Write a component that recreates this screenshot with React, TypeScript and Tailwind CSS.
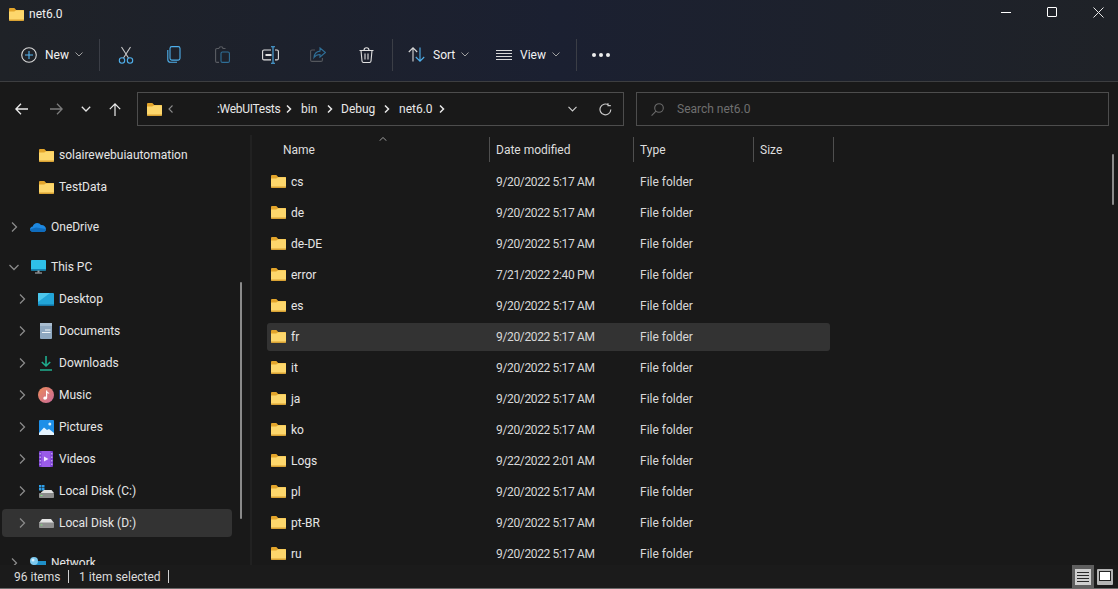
import React from "react";

const Folder = ({ className = "w-[15px] h-[13px]" }: { className?: string }) => (
  <svg viewBox="0 0 15 13" className={className}>
    <path d="M0 1.2C0 .5.5 0 1.2 0h3.6c.4 0 .7.1 1 .4L7.2 2H15v2H0z" fill="#e3a52b" />
    <path d="M0 3.4h5.2L7.2 2.2H13.8c.7 0 1.2.5 1.2 1.2v8.4c0 .7-.5 1.2-1.2 1.2H1.2C.5 13 0 12.500 0 11.800z" fill="#fdd76c" />
    <path d="M0 11.600h15v.2c0 .7-.5 1.200-1.200 1.200H1.200C.5 13 0 12.500 0 11.800z" fill="#d9a233" />
  </svg>
);

const Chevron = ({ open }: { open?: boolean }) => (
  <svg viewBox="0 0 12 12" className="w-3 h-3" fill="none" stroke="#8a8a8a" strokeWidth="1.300">
    {open ? <path d="M1.500 4l4.500 4.500L10.500 4" /> : <path d="M4 1.500L8.500 6 4 10.500" />}
  </svg>
);

const SmallDown = () => (
  <svg viewBox="0 0 8 5" className="w-2 h-[5px]" fill="none" stroke="#a0a0a0" strokeWidth="1">
    <path d="M.5.5L4 4 7.500.5" />
  </svg>
);

const Crumb = () => (
  <svg viewBox="0 0 6 8" className="w-[6px] h-2" fill="none" stroke="#e8e8e8" strokeWidth="1.500">
    <path d="M1 .5L4.500 4 1 7.500" />
  </svg>
);

const Divider = () => <div className="w-px h-8 bg-[#3b3e46] shrink-0" />;

const iconBox = "w-12 h-8 flex items-center justify-center shrink-0";

const Toolbar = () => (
  <div className="flex items-center h-[53px] text-[#f2f2f2]">
    <div className="flex items-center w-[99px] pl-[21px] shrink-0">
      <svg viewBox="0 0 16 16" className="w-4 h-4" fill="none" strokeWidth="1.100">
        <circle cx="8" cy="8" r="7.300" stroke="#d8d8d8" />
        <path d="M8 4v8M4 8h8" stroke="#56b4f0" />
      </svg>
      <span className="ml-[8px] w-[26px]">New</span>
      <span className="ml-[4px] flex"><SmallDown /></span>
    </div>
    <Divider />
    <div className="flex items-center ml-[2px]">
      <div className={iconBox}>
        <svg viewBox="0 0 16 18" className="w-4 h-[18px]" fill="none" strokeWidth="1.100">
          <path d="M3.500 1L10.500 12M12.500 1L5.500 12" stroke="#c8c8c8" />
          <circle cx="4" cy="14.500" r="2.700" stroke="#4fb0ec" />
          <circle cx="12" cy="14.500" r="2.700" stroke="#4fb0ec" />
        </svg>
      </div>
      <div className={iconBox}>
        <svg viewBox="0 0 14 17" className="w-[14px] h-[17px]" fill="none" strokeWidth="1.100" stroke="#4fb0ec">
          <rect x="3" y=".6" width="10" height="13.500" rx="1.800" />
          <path d="M.8 4v9.500C.8 15 2 16.300 3.500 16.300H10" />
        </svg>
      </div>
      <div className={iconBox}>
        <svg viewBox="0 0 15 17" className="w-[15px] h-[17px]" fill="none" strokeWidth="1.100">
          <path d="M4 2.500H2C1.200 2.500.6 3.100.6 4v11c0 .8.600 1.400 1.400 1.400h2M4 2.500C4 1.500 5 .8 6 .8s2 .7 2 1.700h2.500" stroke="#5a5d63" />
          <rect x="6" y="6" width="8.400" height="10.400" rx="1.400" stroke="#2f6f97" />
        </svg>
      </div>
      <div className={iconBox}>
        <svg viewBox="0 0 17 18" className="w-[17px] h-[18px]" fill="none" strokeWidth="1.100">
          <path d="M9 4H2C1.200 4 .6 4.600.6 5.500v7c0 .8.600 1.400 1.400 1.400h7M13 4h2c.8 0 1.400.6 1.400 1.500v7c0 .8-.600 1.400-1.400 1.400h-2" stroke="#e2e2e2" />
          <path d="M3.500 9h6" stroke="#e2e2e2" strokeWidth="2" />
          <path d="M11 1v16M9 .8h4M9 17.200h4" stroke="#4fb0ec" />
        </svg>
      </div>
      <div className={iconBox}>
        <svg viewBox="0 0 16 15" className="w-4 h-[15px]" fill="none" strokeWidth="1.100">
          <path d="M5 3H2C1.200 3 .6 3.600.6 4.500v8.500c0 .8.600 1.400 1.400 1.400h9c.8 0 1.400-.6 1.400-1.400v-2" stroke="#54575d" />
          <path d="M10 1l5.400 4.500L10 10V7.500c-2.500 0-4.500.8-6 3 .3-3.500 2.500-6 6-6.400z" stroke="#2f6f97" />
        </svg>
      </div>
      <div className={iconBox}>
        <svg viewBox="0 0 15 16" className="w-[15px] h-4" fill="none" stroke="#e0e0e0" strokeWidth="1.100">
          <path d="M.5 3.500h14M5 3.500C5 1.800 6 .8 7.500.8S10 1.800 10 3.500M2 3.500l1 10.500c.1 1 .8 1.500 1.600 1.500h5.800c.8 0 1.500-.5 1.600-1.500l1-10.500M6 6.500v6M9 6.500v6" />
        </svg>
      </div>
    </div>
    <div className="ml-[2px]"><Divider /></div>
    <div className="flex items-center w-[103px] pl-[15px] shrink-0">
      <svg viewBox="0 0 17 15" className="w-[17px] h-[15px]" fill="none" strokeWidth="1.100">
        <path d="M5 14.500V1M.8 5L5 .8 9.200 5" stroke="#d8d8d8" />
        <path d="M12 .5V14M7.800 10L12 14.200 16.200 10" stroke="#4fb0ec" />
      </svg>
      <span className="ml-[8px] w-[22px]">Sort</span>
      <span className="ml-[6px] flex"><SmallDown /></span>
    </div>
    <div className="flex items-center w-[80px] shrink-0">
      <svg viewBox="0 0 16 10" className="w-4 h-[10px]" fill="none" stroke="#d8d8d8" strokeWidth="1">
        <path d="M0 .5h16M0 3.500h16M0 6.500h16M0 9.500h16" />
      </svg>
      <span className="ml-[8px] w-[27px]">View</span>
      <span className="ml-[5px] flex"><SmallDown /></span>
    </div>
    <Divider />
    <div className="ml-[15px] flex gap-[3px]">
      <span className="w-[4px] h-[4px] rounded-full bg-[#eeeeee]" />
      <span className="w-[4px] h-[4px] rounded-full bg-[#eeeeee]" />
      <span className="w-[4px] h-[4px] rounded-full bg-[#eeeeee]" />
    </div>
  </div>
);

const TitleBar = () => (
  <div className="flex items-center h-[28px] text-[#f0f0f0]">
    <div className="ml-[9px] flex"><Folder /></div>
    <span className="ml-[5px]">net6.0</span>
    <div className="ml-auto -mr-[3px] flex items-center self-start">
      <div className="w-[46px] h-[24px] flex items-center justify-center">
        <div className="w-[10px] h-px bg-white" />
      </div>
      <div className="w-[46px] h-[24px] flex items-center justify-center">
        <div className="w-[10px] h-[10px] border border-white rounded-[1px]" />
      </div>
      <div className="w-[46px] h-[24px] flex items-center justify-center">
        <svg viewBox="0 0 11 11" className="w-[11px] h-[11px]" stroke="#e8e8e8" strokeWidth="1">
          <path d="M.5.5l10 10M10.500.5l-10 10" />
        </svg>
      </div>
    </div>
  </div>
);

const NavBar = () => (
  <div className="flex items-center h-[53px] pt-px text-[#e8e8e8]">
    <div className="flex items-center w-[137px] shrink-0">
      <svg viewBox="0 0 13 12" className="ml-[15px] w-[13px] h-3" fill="none" stroke="#ececec" strokeWidth="1.300">
        <path d="M13 6H1M6 .8L.9 6 6 11.200" />
      </svg>
      <svg viewBox="0 0 13 12" className="ml-[22px] w-[13px] h-3" fill="none" stroke="#7c7c7c" strokeWidth="1.300">
        <path d="M0 6h12M7 .8L12.100 6 7 11.200" />
      </svg>
      <svg viewBox="0 0 10 6" className="ml-[18px] w-[10px] h-[6px]" fill="none" stroke="#e4e4e4" strokeWidth="1.300">
        <path d="M.8.8L5 5l4.200-4.200" />
      </svg>
      <svg viewBox="0 0 12 13" className="ml-[18px] w-3 h-[13px]" fill="none" stroke="#ececec" strokeWidth="1.200">
        <path d="M6 13V1M.8 6.200L6 .9l5.200 5.300" />
      </svg>
    </div>
    <div className="flex items-center w-[487px] h-[34px] border border-[#4d4d4d] shrink-0">
      <div className="ml-[9px] flex"><Folder /></div>
      <svg viewBox="0 0 5 8" className="ml-[6px] w-[5px] h-2" fill="none" stroke="#8c8c8c" strokeWidth="1.100">
        <path d="M4.500.5L1 4l3.500 3.500" />
      </svg>
      <span className="ml-[44px] w-[62px] tracking-[-0.3px]">:WebUITests</span>
      <span className="ml-[7px] flex"><Crumb /></span>
      <span className="ml-[9px] w-[17px]">bin</span>
      <span className="ml-[9px] flex"><Crumb /></span>
      <span className="ml-[8px] w-[35px]">Debug</span>
      <span className="ml-[8px] flex"><Crumb /></span>
      <span className="ml-[9px] w-[32px]">net6.0</span>
      <span className="ml-[8px] flex"><Crumb /></span>
      <svg viewBox="0 0 9 6" className="ml-[123px] w-[9px] h-[6px]" fill="none" stroke="#d0d0d0" strokeWidth="1.100">
        <path d="M.5.8L4.500 5 8.500.8" />
      </svg>
      <svg viewBox="0 0 13 13" className="ml-[22px] w-[13px] h-[13px]" fill="none" stroke="#c8c8c8" strokeWidth="1.200">
        <path d="M11.800 6.500A5.400 5.400 0 1 1 9.500 2M9 .2V2.700h2.800" />
      </svg>
    </div>
    <div className="flex items-center ml-[12px] w-[473px] h-[34px] border border-[#4d4d4d] shrink-0 text-[#6f6f6f]">
      <svg viewBox="0 0 13 13" className="ml-[14px] w-[13px] h-[13px]" fill="none" stroke="#6a6a6a" strokeWidth="1.100">
        <circle cx="8" cy="5" r="4.300" />
        <path d="M5 8.200L.6 12.600" />
      </svg>
      <span className="ml-[13px]">Search net6.0</span>
    </div>
  </div>
);

const icons: Record<string, React.ReactNode> = {
  folder: <Folder />,
  onedrive: (
    <svg viewBox="0 0 16 10" className="w-4 h-[10px]">
      <path d="M3.500 10C1.500 10 0 8.800 0 7.200c0-1.500 1.200-2.600 2.700-2.800C3.400 2.500 5.100 1 7.200 1c1.600 0 3 .8 3.700 2.100 2.800-.3 5.100 1.500 5.100 3.900 0 1.800-1.300 3-3 3z" fill="#1e88e0" />
      <path d="M3.500 10C1.500 10 0 8.800 0 7.200L6 5.500l10 1.500c0 1.800-1.300 3-3 3z" fill="#0f6cbd" />
    </svg>
  ),
  pc: (
    <svg viewBox="0 0 15 14" className="w-[15px] h-[14px]">
      <rect x="0" y="0" width="15" height="10.500" rx=".8" fill="#2fc0e8" />
      <rect x="0" y="9" width="15" height="1.500" fill="#1284b5" />
      <path d="M6.500 10.500h2v2h-2z" fill="#9aa0a6" />
      <path d="M4 12.500h7V13.500H4z" fill="#b8bcc0" />
    </svg>
  ),
  desktop: (
    <svg viewBox="0 0 16 13" className="w-4 h-[13px]">
      <rect width="16" height="13" rx="1" fill="#22a5d8" />
      <path d="M0 1c0-.6.4-1 1-1h11L0 9z" fill="#4cc7ec" />
      <rect y="11.500" width="16" height="1.500" fill="#0e6f9e" />
    </svg>
  ),
  documents: (
    <svg viewBox="0 0 12 16" className="w-3 h-4">
      <rect width="12" height="16" rx="1" fill="#8fa8c0" />
      <rect width="12" height="3" fill="#a9bdd0" />
      <path d="M5 6.500h5.500V7.500H5zM2 9h8.500v1H2z" fill="#edf2f6" />
    </svg>
  ),
  downloads: (
    <svg viewBox="0 0 12 15" className="w-3 h-[15px]" fill="none" stroke="#1fae8f" strokeWidth="1.600">
      <path d="M6 0v9.500M1.800 6L6 10l4.200-4M0 14h12" />
    </svg>
  ),
  music: (
    <svg viewBox="0 0 16 16" className="w-4 h-4">
      <defs>
        <linearGradient id="mu" x1="0" y1="0" x2="1" y2="1">
          <stop offset="0" stopColor="#ec8a5a" />
          <stop offset="1" stopColor="#c96a9a" />
        </linearGradient>
      </defs>
      <circle cx="8" cy="8" r="8" fill="url(#mu)" />
      <path d="M8 3.500h1.200c0 1.400.8 2 2 2.200v1.100C10.200 6.700 9.600 6.400 9.200 6v4.800c0 1.300-1 2-2.200 2s-1.700-.8-1.700-1.500c0-1 .9-1.700 2-1.700.3 0 .5 0 .7.100z" fill="#fff" />
    </svg>
  ),
  pictures: (
    <svg viewBox="0 0 15 15" className="w-[15px] h-[15px]">
      <rect width="15" height="15" rx="1" fill="#1d8fe8" />
      <circle cx="10.800" cy="4" r="1.500" fill="#d5efff" />
      <path d="M0 13l5-5.500 3 2.500 2-1 5 4v2H0z" fill="#e6f4ff" />
    </svg>
  ),
  videos: (
    <svg viewBox="0 0 14 16" className="w-[14px] h-4">
      <rect width="14" height="16" rx="1" fill="#7a3fd0" />
      <rect x="2.500" width="9" height="16" fill="#9a5ce8" />
      <path d="M5 5.500l4.500 2.500L5 10.500z" fill="#f2e8ff" />
      <path d="M.6 2h1.200v1.500H.6zM.6 5.500h1.200V7H.6zM.6 9h1.200v1.500H.6zM.6 12.500h1.200V14H.6zM12.200 2h1.200v1.500h-1.200zM12.200 5.500h1.200V7h-1.200zM12.200 9h1.200v1.500h-1.200zM12.200 12.500h1.200V14h-1.200z" fill="#cdb5f5" />
    </svg>
  ),
  diskc: (
    <svg viewBox="0 0 15 13" className="w-[15px] h-[13px]">
      <path d="M0 0h2.500v2.500H0zM3 0h2.500v2.500H3zM0 3h2.500v2.500H0zM3 3h2.500v2.500H3z" fill="#2f9fe8" />
      <path d="M2 7.500L5 5h7.500l2.500 3H2z" fill="#e0e0e0" />
      <rect y="8" width="15" height="5" rx=".8" fill="#8c8c8c" />
      <rect x="1.500" y="10" width="2" height="1" fill="#7fe07f" />
    </svg>
  ),
  diskd: (
    <svg viewBox="0 0 15 9" className="w-[15px] h-[9px]">
      <path d="M0 4l3-4h9l3 4z" fill="#e4e4e4" />
      <rect y="3.500" width="15" height="5.500" rx=".8" fill="#8f8f8f" />
      <rect x="1.500" y="5.500" width="2" height="1" fill="#7fe07f" />
    </svg>
  ),
  network: (
    <svg viewBox="0 0 16 13" className="w-4 h-[13px]">
      <rect x="3" y="4" width="13" height="9" fill="#1f8fc8" />
      <circle cx="4" cy="4" r="4" fill="#7cc8ee" />
      <circle cx="3" cy="3" r="1.500" fill="#d6f0ff" />
    </svg>
  ),
};

type SideItem = { label: string; icon: string; top?: boolean; root?: boolean; arrow?: boolean; open?: boolean; active?: boolean };

const sideItems: SideItem[] = [
  { label: "solairewebuiautomation", icon: "folder" },
  { label: "TestData", icon: "folder" },
  { label: "OneDrive", icon: "onedrive", top: true, root: true, arrow: true },
  { label: "This PC", icon: "pc", top: true, root: true, arrow: true, open: true },
  { label: "Desktop", icon: "desktop", arrow: true },
  { label: "Documents", icon: "documents", arrow: true },
  { label: "Downloads", icon: "downloads", arrow: true },
  { label: "Music", icon: "music", arrow: true },
  { label: "Pictures", icon: "pictures", arrow: true },
  { label: "Videos", icon: "videos", arrow: true },
  { label: "Local Disk (C:)", icon: "diskc", arrow: true },
  { label: "Local Disk (D:)", icon: "diskd", arrow: true, active: true },
  { label: "Network", icon: "network", top: true, root: true, arrow: true },
];

const SideRow = ({ item }: { item: SideItem }) => (
  <div className={`h-8 flex items-center ${item.top ? "mt-2" : ""}`}>
    <div className={`w-[230px] h-7 flex items-center rounded ${item.root ? "pl-[6px]" : "pl-[14px]"} ${item.active ? "bg-[#333333]" : ""}`}>
      <div className="w-3 h-3 shrink-0">{item.arrow && <Chevron open={item.open} />}</div>
      <div className="ml-[10px] w-4 h-4 flex items-center justify-center shrink-0">{icons[item.icon]}</div>
      <span className="ml-[5px]">{item.label}</span>
    </div>
  </div>
);

const files: [string, string][] = [
  ["cs", "9/20/2022 5:17 AM"],
  ["de", "9/20/2022 5:17 AM"],
  ["de-DE", "9/20/2022 5:17 AM"],
  ["error", "7/21/2022 2:40 PM"],
  ["es", "9/20/2022 5:17 AM"],
  ["fr", "9/20/2022 5:17 AM"],
  ["it", "9/20/2022 5:17 AM"],
  ["ja", "9/20/2022 5:17 AM"],
  ["ko", "9/20/2022 5:17 AM"],
  ["Logs", "9/22/2022 2:01 AM"],
  ["pl", "9/20/2022 5:17 AM"],
  ["pt-BR", "9/20/2022 5:17 AM"],
  ["ru", "9/20/2022 5:17 AM"],
];

const FileList = () => (
  <div className="flex-1 relative overflow-hidden">
    <div className="flex items-start h-[30px] pt-[2px] text-[#dedede]">
      <div className="relative w-[237px] h-[25px] pl-[31px] flex items-center shrink-0">
        Name
        <svg viewBox="0 0 8 4" className="absolute left-[127px] top-0 w-2 h-1" fill="none" stroke="#9a9a9a" strokeWidth="1">
          <path d="M.5 3.800L4 .5l3.500 3.300" />
        </svg>
      </div>
      <div className="w-[144px] h-[25px] pl-[6px] flex items-center border-l border-[#4f4f4f] shrink-0">Date modified</div>
      <div className="w-[120px] h-[25px] pl-[6px] flex items-center border-l border-[#4f4f4f] shrink-0">Type</div>
      <div className="w-[81px] h-[25px] pl-[6px] flex items-center border-l border-[#4f4f4f] border-r shrink-0">Size</div>
    </div>
    <div className="pt-px">
      {files.map(([name, date]) => (
        <div key={name} className="h-[31px] flex items-center">
          <div className={`ml-[15px] w-[563px] h-7 flex items-center rounded-[3px] pl-1 text-[#d8d8d8] ${name === "fr" ? "bg-[#333333]" : ""}`}>
            <Folder />
            <span className="ml-[5px] w-[205px] text-[#e6e6e6]">{name}</span>
            <span className="w-[144px] tracking-[-0.35px]">{date}</span>
            <span>File folder</span>
          </div>
        </div>
      ))}
    </div>
    <div className="absolute right-[4px] top-[19px] w-[2px] h-[51px] rounded-full bg-[#8a8a8a]" />
  </div>
);

export default function App() {
  return (
    <div className="w-[1118px] h-[589px] overflow-hidden flex flex-col bg-[#191919] text-[12px] whitespace-nowrap font-['Roboto','Liberation_Sans',sans-serif]">
      <div className="h-[82px] shrink-0 border-b border-[#3d3e40] bg-gradient-to-r from-[#1f2227] via-[#1b2031] to-[#1f2227]">
        <TitleBar />
        <Toolbar />
      </div>
      <NavBar />
      <div className="flex flex-1 min-h-0">
        <div className="relative w-[252px] shrink-0 border-r-2 border-[#212121] pl-[2px] pt-1 overflow-hidden text-[#e6e6e6]">
          {sideItems.map((item) => (
            <SideRow key={item.label} item={item} />
          ))}
          <div className="absolute left-[240px] top-[147px] w-[2px] h-[237px] rounded-full bg-[#8a8a8a]" />
        </div>
        <FileList />
      </div>
      <div className="h-[24px] shrink-0 flex items-center border-b border-[#6a6a6a] bg-[#1b1b1b] text-[#dcdcdc]">
        <span className="ml-[14px] w-[44px]">96 items</span>
        <div className="ml-[10px] w-px h-[13px] bg-[#d0d0d0]" />
        <span className="ml-[10px] w-[79px]">1 item selected</span>
        <div className="ml-[10px] w-px h-[13px] bg-[#d0d0d0]" />
        <div className="ml-auto flex items-center self-end">
          <div className="w-[22px] h-[23px] bg-[#5f5f5f] flex items-center justify-center">
            <div className="w-4 h-4 bg-[#cfcfcf] flex flex-col justify-center gap-[2px] px-[2px]">
              <div className="h-px bg-[#2a2a2a]" />
              <div className="h-px bg-[#2a2a2a]" />
              <div className="h-px bg-[#2a2a2a]" />
              <div className="h-px bg-[#2a2a2a]" />
            </div>
          </div>
          <div className="w-[22px] h-[23px] flex items-center justify-center">
            <div className="w-4 h-4 bg-[#b5b5b5] p-[2px] pb-1 rounded-[1px]">
              <div className="w-full h-full bg-white border border-[#222222]" />
            </div>
          </div>
          <div className="w-[2px]" />
        </div>
      </div>
    </div>
  );
}
